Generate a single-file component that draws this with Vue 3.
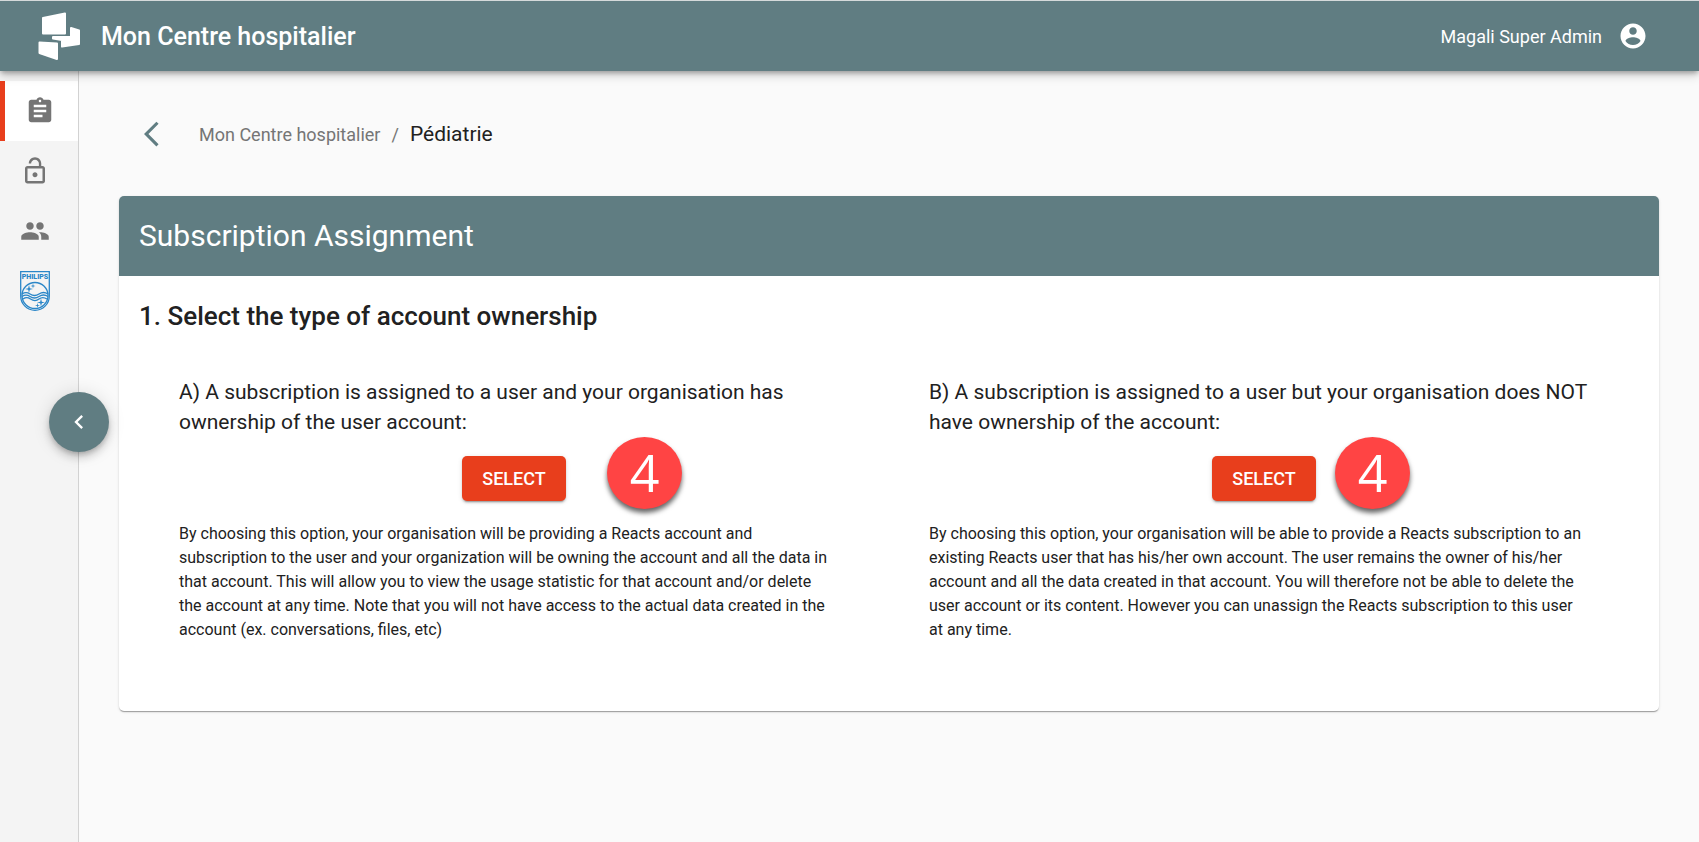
<script setup>
const navItems = [
  {
    id: 'subscriptions',
    label: 'Subscriptions',
    active: true,
    path: 'M19 3h-4.18C14.4 1.84 13.3 1 12 1c-1.3 0-2.4.84-2.82 2H5c-1.1 0-2 .9-2 2v14c0 1.1.9 2 2 2h14c1.1 0 2-.9 2-2V5c0-1.1-.9-2-2-2zm-7 0c.55 0 1 .45 1 1s-.45 1-1 1-1-.45-1-1 .45-1 1-1zm2 14H7v-2h7v2zm3-4H7v-2h10v2zm0-4H7V7h10v2z',
  },
  {
    id: 'permissions',
    label: 'Permissions',
    active: false,
    path: 'M12 17c1.1 0 2-.9 2-2s-.9-2-2-2-2 .9-2 2 .9 2 2 2zm6-9h-1V6c0-2.76-2.24-5-5-5S7 3.240 7 6h1.900c0-1.710 1.390-3.100 3.100-3.100 1.710 0 3.100 1.390 3.100 3.100v2H6c-1.100 0-2 .9-2 2v10c0 1.100.9 2 2 2h12c1.100 0 2-.9 2-2V10c0-1.100-.9-2-2-2zm0 12H6V10h12v10z',
  },
  {
    id: 'users',
    label: 'Users',
    active: false,
    path: 'M16 11c1.660 0 2.990-1.340 2.990-3S17.660 5 16 5c-1.660 0-3 1.340-3 3s1.340 3 3 3zm-8 0c1.660 0 2.990-1.340 2.990-3S9.660 5 8 5C6.340 5 5 6.340 5 8s1.340 3 3 3zm0 2c-2.330 0-7 1.170-7 3.500V19h14v-2.500c0-2.330-4.670-3.500-7-3.500zm8 0c-.29 0-.62.02-.97.05 1.160.84 1.970 1.970 1.970 3.450V19h6v-2.500c0-2.330-4.670-3.500-7-3.500z',
  },
]

const options = [
  {
    id: 'a',
    title:
      'A) A subscription is assigned to a user and your organisation has ownership of the user account:',
    text: 'By choosing this option, your organisation will be providing a Reacts account and subscription to the user and your organization will be owning the account and all the data in that account. This will allow you to view the usage statistic for that account and/or delete the account at any time. Note that you will not have access to the actual data created in the account (ex. conversations, files, etc)',
  },
  {
    id: 'b',
    title:
      'B) A subscription is assigned to a user but your organisation does NOT have ownership of the account:',
    text: 'By choosing this option, your organisation will be able to provide a Reacts subscription to an existing Reacts user that has his/her own account. The user remains the owner of his/her account and all the data created in that account. You will therefore not be able to delete the user account or its content. However you can unassign the Reacts subscription to this user at any time.',
  },
]
</script>

<template>
  <div class="app">
    <header class="topbar">
      <svg class="logo" viewBox="0 0 44 50" aria-hidden="true">
        <path d="M6 7 28 2.500v20H6z" />
        <path d="M34 17l8 2.500V33l-17 2.500V29l-9-1.500V26h18z" />
        <path d="M2.500 31.500 20 32.500v15.500L2.500 42z" />
      </svg>
      <span class="org">Mon Centre hospitalier</span>
      <button class="account" type="button">
        <span>Magali Super Admin</span>
        <svg class="icon" viewBox="0 0 24 24" aria-hidden="true">
          <path d="M12 2C6.480 2 2 6.480 2 12s4.480 10 10 10 10-4.480 10-10S17.520 2 12 2zm0 3c1.660 0 3 1.340 3 3s-1.340 3-3 3-3-1.340-3-3 1.340-3 3-3zm0 14.200c-2.500 0-4.710-1.280-6-3.220.03-1.990 4-3.080 6-3.080 1.990 0 5.970 1.090 6 3.080-1.290 1.940-3.500 3.220-6 3.220z" />
        </svg>
      </button>
    </header>

    <div class="body">
      <nav class="sidebar" aria-label="Main">
        <a
          v-for="item in navItems"
          :key="item.id"
          class="nav-item"
          :class="{ active: item.active }"
          :href="'#' + item.id"
          :aria-label="item.label"
        >
          <svg class="icon" viewBox="0 0 24 24" aria-hidden="true"><path :d="item.path" /></svg>
        </a>
        <a class="nav-item" href="#philips" aria-label="Philips">
          <svg class="shield" viewBox="0 0 30 40">
            <path class="line" d="M.7.7h28.600v24.300a14.300 14.300 0 0 1-28.600 0z" />
            <text x="15" y="8" text-anchor="middle">PHILIPS</text>
            <circle class="line" cx="15" cy="24.500" r="13" />
            <path class="line" d="M2 23c3-2 5-2 8 0s6 2 9 0 6-2 9 0M2 25.500c3-2 5-2 8 0s6 2 9 0 6-2 9 0M3 28c3-2 4.500-2 7.500 0s6 2 8.500 0 5-2 8 0" />
            <path d="M9 14l.8 3.200L13 18l-3.200.8L9 22l-.8-3.200L5 18l3.200-.8zM13 12.500l.5 2 2 .5-2 .5-.5 2-.5-2-2-.5 2-.5zM21 27.500l.8 3.200 3.200.8-3.200.8-.8 3.200-.8-3.200-3.200-.8 3.200-.8zM17.500 32l.5 2 2 .5-2 .5-.5 2-.5-2-2-.5 2-.5z" />
          </svg>
        </a>
        <button class="collapse" type="button" aria-label="Collapse menu">
          <svg viewBox="0 0 24 24" aria-hidden="true">
            <path d="M15.410 7.410 14 6l-6 6 6 6 1.410-1.410L10.830 12z" />
          </svg>
        </button>
      </nav>

      <main class="content">
        <div class="crumbs">
          <a class="back" href="#back" aria-label="Back">
            <svg class="icon" viewBox="0 0 24 24" aria-hidden="true">
              <path d="M11.670 3.870 9.900 2.100 0 12l9.900 9.900 1.770-1.770L3.540 12z" />
            </svg>
          </a>
          <a class="parent" href="#centre">Mon Centre hospitalier</a>
          <span class="slash">/</span>
          <span class="current">Pédiatrie</span>
        </div>

        <section class="card">
          <h1>Subscription Assignment</h1>
          <div class="card-body">
            <h2>1. Select the type of account ownership</h2>
            <div class="options">
              <article v-for="option in options" :key="option.id" class="option">
                <h3>{{ option.title }}</h3>
                <div class="action">
                  <button class="select" type="button">SELECT</button>
                  <span class="step" :class="'step-' + option.id">4</span>
                </div>
                <p>{{ option.text }}</p>
              </article>
            </div>
          </div>
        </section>
      </main>
    </div>
  </div>
</template>

<style>
body {
  margin: 0;
  background: #fafafa;
}
</style>

<style scoped>
* {
  box-sizing: border-box;
}
.app {
  display: flex;
  flex-direction: column;
  min-height: 100vh;
  font-family: Roboto, "Liberation Sans", sans-serif;
  color: #212121;
}
button {
  border: 0;
  font: inherit;
  cursor: pointer;
}
a {
  text-decoration: none;
}
.icon {
  display: block;
  width: 30px;
  height: 30px;
  fill: currentColor;
}
.topbar {
  position: relative;
  z-index: 1;
  display: flex;
  align-items: center;
  height: 71px;
  padding: 0 51px 0 37px;
  border-top: 1px solid #d5dadb;
  background: #607d82;
  color: #fff;
  box-shadow: 0 3px 5px -1px rgba(0, 0, 0, 0.3), 0 5px 10px rgba(0, 0, 0, 0.14);
}
.logo {
  width: 44px;
  height: 50px;
  fill: #fff;
  stroke: #fff;
  stroke-width: 2;
  stroke-linejoin: round;
}
.org {
  margin-left: 20px;
  font-size: 25px;
  font-weight: 500;
}
.account {
  display: flex;
  align-items: center;
  gap: 16px;
  margin-left: auto;
  padding: 0;
  background: none;
  color: inherit;
  font-size: 18px;
}
.body {
  display: flex;
  flex: 1;
}
.sidebar {
  flex: none;
  width: 79px;
  padding-top: 10px;
  border-right: 1px solid #d2d2d2;
  background: #f4f4f4;
}
.nav-item {
  display: flex;
  align-items: center;
  height: 60px;
  padding-left: 20px;
  color: #757575;
}
.nav-item.active {
  border-left: 5px solid #e83e1c;
  background: #fff;
}
.shield {
  width: 30px;
  height: 40px;
  fill: #2a86c8;
}
.shield .line {
  fill: none;
  stroke: #2a86c8;
  stroke-width: 1.300;
}
.shield text {
  font: 900 7px Roboto, sans-serif;
}
.collapse {
  position: fixed;
  top: 50%;
  left: 49px;
  z-index: 2;
  display: flex;
  align-items: center;
  justify-content: center;
  width: 60px;
  height: 60px;
  margin-top: -29px;
  padding: 0;
  border-radius: 50%;
  background: #607d82;
  box-shadow: 0 3px 5px -1px rgba(0, 0, 0, 0.2), 0 6px 10px rgba(0, 0, 0, 0.14), 0 1px 18px rgba(0, 0, 0, 0.12);
}
.collapse svg {
  width: 28px;
  height: 28px;
  fill: #fff;
}
.content {
  flex: 1;
  min-width: 0;
  padding: 40px;
}
.crumbs {
  display: flex;
  align-items: center;
  height: 46px;
  margin-bottom: 39px;
  padding-left: 25px;
  font-size: 18px;
}
.back {
  margin-right: 25px;
  color: #607d82;
}
.parent,
.slash {
  color: #757575;
}
.slash {
  margin: 0 11px;
}
.current {
  font-size: 21px;
}
.card {
  overflow: hidden;
  border-radius: 5px;
  background: #fff;
  box-shadow: 0 2px 1px -1px rgba(0, 0, 0, 0.2), 0 1px 1px rgba(0, 0, 0, 0.14), 0 1px 3px rgba(0, 0, 0, 0.12);
}
h1,
h2,
h3,
p {
  margin: 0;
}
h1 {
  padding: 0 20px;
  background: #607d82;
  color: #fff;
  font-size: 30px;
  font-weight: 400;
  line-height: 80px;
}
.card-body {
  padding: 20px 20px 69px;
}
h2 {
  font-size: 26px;
  font-weight: 500;
  line-height: 40px;
}
.options {
  display: grid;
  grid-template-columns: 1fr 1fr;
  margin-top: 41px;
}
.option {
  padding: 0 40px;
}
h3 {
  font-size: 21px;
  font-weight: 400;
  line-height: 30px;
}
.action {
  position: relative;
  width: 104px;
  margin: 19px auto 21px;
}
.select {
  display: block;
  width: 100%;
  height: 45px;
  padding: 0;
  border-radius: 5px;
  background: #e83e1c;
  color: #fff;
  font-size: 18px;
  font-weight: 500;
  box-shadow: 0 3px 1px -2px rgba(0, 0, 0, 0.2), 0 2px 2px rgba(0, 0, 0, 0.14), 0 1px 5px rgba(0, 0, 0, 0.12);
}
.step {
  position: absolute;
  top: -19px;
  width: 75px;
  height: 72px;
  border-radius: 50%;
  background: #ff4444;
  color: #fff;
  font: 500 52px/70px "Open Sans", "Noto Sans", sans-serif;
  text-align: center;
  box-shadow: 0 4px 5px rgba(0, 0, 0, 0.6);
}
.step-a {
  left: 145px;
}
.step-b {
  left: 123px;
}
p {
  padding-right: 12px;
  font-size: 16px;
  line-height: 24px;
}
</style>
